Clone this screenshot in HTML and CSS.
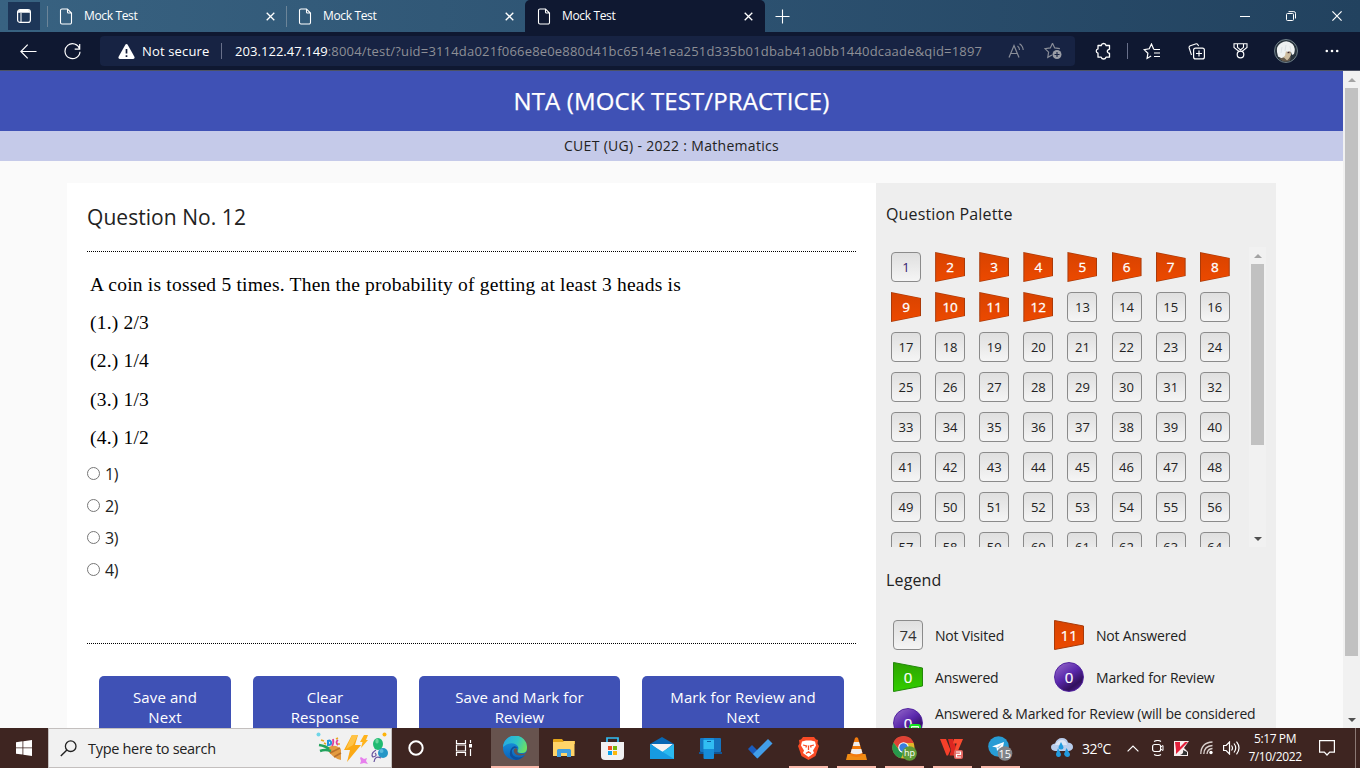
FILE: index.html
```html
<!DOCTYPE html>
<html lang="en">
<head>
<meta charset="utf-8">
<title>Mock Test</title>
<link rel="stylesheet" href="styles.css">
</head>
<body>
<svg class="defs" width="0" height="0">
  <defs>
    <linearGradient id="g-red" x1="0" y1="0" x2="0" y2="1"><stop offset="0" stop-color="#d84300"/><stop offset="1" stop-color="#ec4900"/></linearGradient>
    <linearGradient id="g-green" x1="0" y1="0" x2="0" y2="1"><stop offset="0" stop-color="#2ea300"/><stop offset="1" stop-color="#31cf00"/></linearGradient>
    <symbol id="page" viewBox="0 0 14 17"><path d="M1.500 2.500a1.500 1.500 0 0 1 1.500-1.500h5.500l4 4v9.500a1.500 1.500 0 0 1-1.500 1.500h-8a1.500 1.500 0 0 1-1.500-1.500zM8.500 1v3a1 1 0 0 0 1 1h3" fill="none" stroke="#fff" stroke-width="1.100"/></symbol>
    <symbol id="cross" viewBox="0 0 9 9"><path d="M.7.7l7.600 7.600M8.300.7L.7 8.300" stroke="#fff" stroke-width="1.300"/></symbol>
  </defs>
</svg>
<div class="screen">
  <div class="tabstrip">
    <div class="tab-menu"><svg width="14" height="14" viewBox="0 0 14 14"><rect x=".6" y=".6" width="12.800" height="12.800" rx="2.500" fill="none" stroke="#fff" stroke-width="1.200"/><path d="M1 3.800V3Q1 1 3 1h8q2 0 2 2v.8z" fill="#fff"/><path d="M4 4v9" stroke="#fff"/></svg></div>
    <div class="tab"><svg class="tab-page" width="14" height="17"><use href="#page"/></svg><span>Mock Test</span><svg width="9" height="9"><use href="#cross"/></svg></div>
    <div class="tab"><svg class="tab-page" width="14" height="17"><use href="#page"/></svg><span>Mock Test</span><svg width="9" height="9"><use href="#cross"/></svg></div>
    <div class="tab active"><svg class="tab-page" width="14" height="17"><use href="#page"/></svg><span>Mock Test</span><svg width="9" height="9"><use href="#cross"/></svg></div>
    <div class="new-tab"><svg width="15" height="15" viewBox="0 0 15 15"><path d="M7.500.5v14M.5 7.500h14" stroke="#fff" stroke-width="1.100"/></svg></div>
    <div class="win-controls">
      <span><svg width="10" height="10"><path d="M0 5.500h10" stroke="#fff"/></svg></span>
      <span><svg width="10" height="10" viewBox="0 0 10 10"><rect x=".5" y="2.500" width="7" height="7" rx="1" fill="none" stroke="#fff"/><path d="M2.500.6h5.300q1.700 0 1.700 1.700v5.200" fill="none" stroke="#fff"/></svg></span>
      <span><svg width="10" height="10" viewBox="0 0 10 10"><path d="M.4.4l9.200 9.200M9.600.4L.4 9.600" stroke="#fff" stroke-width="1.200"/></svg></span>
    </div>
  </div>

  <div class="toolbar">
    <div class="tool back"><svg width="17" height="15" viewBox="0 0 17 15"><path d="M16.500 7.500H1M7.700.7L.9 7.500l6.800 6.800" fill="none" stroke="#fff" stroke-width="1.200"/></svg></div>
    <div class="tool"><svg width="17" height="17" viewBox="0 0 17 17"><path d="M15.700 6A7.500 7.500 0 1 0 16 8.700M15.700 1v5.200h-5" fill="none" stroke="#fff" stroke-width="1.200"/></svg></div>
    <div class="address">
      <svg class="warn" width="17" height="15" viewBox="0 0 17 15"><path d="M7.300.8q1.200-1.600 2.400 0l6.700 12q.7 2-1.200 2.200H1.800Q-.1 14.800.6 12.800z" fill="#fff"/><path d="M8.500 5v4.500M8.500 11.300v1.700" stroke="#101936" stroke-width="1.700"/></svg>
      <span class="not-secure">Not secure</span>
      <i class="divider"></i>
      <span class="url"><b>203.122.47.149</b>:8004/test/?uid=3114da021f066e8e0e880d41bc6514e1ea251d335b01dbab41a0bb1440dcaade&amp;qid=1897</span>
      <svg class="read" width="17" height="16" viewBox="0 0 17 16"><path d="M1 14.500L6 2.500l5 12M2.800 10.500h6.400" fill="none" stroke="#898d98" stroke-width="1.200"/><path d="M9.500 3q2 1.500 2 4M11.500.8q3.500 2.300 3.700 6.200" fill="none" stroke="#898d98" stroke-width="1.100"/></svg>
      <svg width="18" height="18" viewBox="0 0 18 18"><path d="M8.500 1.300l2.200 4.600 5.200.8M8 13l-4.200 2.300.8-5.200L1 6.700l5.300-.8 2.200-4.600" fill="none" stroke="#898d98" stroke-width="1.200"/><circle cx="13" cy="12.500" r="4.500" fill="#9a9da6"/><path d="M13 10v5M10.500 12.500h5" stroke="#172343" stroke-width="1.100"/></svg>
    </div>
    <div class="tool puzzle"><svg width="17" height="18" viewBox="0 0 17 18"><path d="M3 3.500h3.200a2.500 2.500 0 0 1 4.900 0h3.400v3.700l-1.300.6a1.700 1.700 0 0 0 0 3l1.300.6v3.800H11a2.500 2.500 0 0 1-4.800 0H3v-4a2.200 2.200 0 0 1 0-4.300z" fill="none" stroke="#fff" stroke-width="1.300" stroke-linejoin="round"/></svg></div>
    <i class="divider"></i>
    <div class="tool favs"><svg width="18" height="17" viewBox="0 0 18 17"><path d="M10.700 6.200L8.500 1 6.200 5.800l-5 .8 3.700 3.600-.8 5.200 4-2.400M10.700 6.500H17M11 10h6M11 13.500h6" fill="none" stroke="#fff" stroke-width="1.200"/></svg></div>
    <div class="tool"><svg width="17" height="17" viewBox="0 0 17 17"><path d="M3.500 12L1.200 5Q.7 3.300 2.300 2.700L7.500.9q1.600-.5 2.400.8l.7 1.300" fill="none" stroke="#fff" stroke-width="1.100"/><rect x="5.600" y="5.100" width="10.800" height="10.800" rx="2" fill="none" stroke="#fff" stroke-width="1.200"/><path d="M11 7.500v6M8 10.500h6" stroke="#fff" stroke-width="1.200"/></svg></div>
    <div class="tool"><svg width="15" height="16" viewBox="0 0 15 16"><path d="M1 .8h13v3.700L9 8.500H6L1 4.500zM4.500 1v3.300L7.500 7l3-2.700V1" fill="none" stroke="#fff" stroke-width="1.100"/><circle cx="7.500" cy="11.500" r="3.300" fill="#0f1831" stroke="#fff" stroke-width="1.200"/></svg></div>
    <div class="tool profile"><svg width="24" height="24" viewBox="0 0 24 24"><circle cx="12" cy="12" r="11.500" fill="#27323c" stroke="#70808a"/><path d="M8.500 12h8l.5 4-3 6-5-1z" fill="#cdbb9e"/><path d="M3 13Q2 7 7 4q6-4 11.500 1Q22 9 20 15l-2 1-1-3-2-1-1 2-2-2-1 4.500-3 3-4-2z" fill="#eef1f2"/><path d="M8 8l-1 6M12 6l-1 6M16 7l1 5" stroke="#d3dade" stroke-width=".7"/><path d="M13.500 12.700h2v1.500h-2z" fill="#3d2628"/><path d="M5 19.500l5-1 3 3 4-4-1 4q-6 3-11-2" fill="#64594c"/></svg></div>
    <div class="tool"><svg width="14" height="4" viewBox="0 0 14 4"><circle cx="1.800" cy="2" r="1.300" fill="#fff"/><circle cx="7" cy="2" r="1.300" fill="#fff"/><circle cx="12.200" cy="2" r="1.300" fill="#fff"/></svg></div>
  </div>

  <div class="viewport">
    <div class="page">
      <header class="banner"><span>NTA (MOCK TEST/PRACTICE)</span></header>
      <div class="subject"><span>CUET (UG) - 2022 : Mathematics</span></div>
      <div class="content">
        <main class="question">
          <h1><span>Question No. 12</span></h1>
          <div class="question-body">
            <div class="statement">
              <p><span>A coin is tossed 5 times. Then the probability of getting at least 3 heads is</span></p>
              <p>(1.) 2/3</p><p>(2.) 1/4</p><p>(3.) 1/3</p><p>(4.) 1/2</p>
            </div>
            <div class="options">
              <label><i></i>1)</label><label><i></i>2)</label><label><i></i>3)</label><label><i></i>4)</label>
            </div>
          </div>
          <div class="actions">
            <div class="btn b1">Save and<br>Next</div>
            <div class="btn b2">Clear<br>Response</div>
            <div class="btn b3">Save and Mark for<br>Review</div>
            <div class="btn b4">Mark for Review and<br>Next</div>
          </div>
        </main>
        <aside class="side">
          <h2 class="palette-title"><span>Question Palette</span></h2>
          <div class="palette">
            <div class="cells">
              <b class="visit">1</b><b class="no">2</b><b class="no">3</b><b class="no">4</b><b class="no">5</b><b class="no">6</b><b class="no">7</b><b class="no">8</b>
              <b class="no">9</b><b class="no">10</b><b class="no">11</b><b class="no">12</b><b>13</b><b>14</b><b>15</b><b>16</b>
              <b>17</b><b>18</b><b>19</b><b>20</b><b>21</b><b>22</b><b>23</b><b>24</b>
              <b>25</b><b>26</b><b>27</b><b>28</b><b>29</b><b>30</b><b>31</b><b>32</b>
              <b>33</b><b>34</b><b>35</b><b>36</b><b>37</b><b>38</b><b>39</b><b>40</b>
              <b>41</b><b>42</b><b>43</b><b>44</b><b>45</b><b>46</b><b>47</b><b>48</b>
              <b>49</b><b>50</b><b>51</b><b>52</b><b>53</b><b>54</b><b>55</b><b>56</b>
              <b>57</b><b>58</b><b>59</b><b>60</b><b>61</b><b>62</b><b>63</b><b>64</b>
            </div>
            <div class="scrollbar"><i class="up"></i><i class="thumb"></i><i class="down"></i></div>
          </div>
          <h2 class="legend-title"><span>Legend</span></h2>
          <div class="legend">
            <div class="mark box">74</div><span>Not Visited</span>
            <div class="mark"><svg width="30" height="30"><path d="M.5.5L29.500 6v18L.5 29.500z" fill="url(#g-red)" stroke="#a83a0a"/></svg><em>11</em></div><span>Not Answered</span>
            <div class="mark"><svg width="30" height="30"><path d="M.5.5L29.500 6v18L.5 29.500z" fill="url(#g-green)" stroke="#23880c"/></svg><em>0</em></div><span>Answered</span>
            <div class="mark ball"><em>0</em></div><span>Marked for Review</span>
            <div class="mark ball"><em>0</em><svg class="tick" width="12" height="14"><rect x="1" y="1" width="10" height="10" rx="2" fill="#e9ffe5" stroke="#12e61c" stroke-width="2"/><path d="M3 4.500h6" stroke="#12e61c" stroke-width="2"/></svg></div>
            <span class="wide">Answered &amp; Marked for Review (will be considered for evaluation)</span>
          </div>
        </aside>
      </div>
    </div>
    <div class="scrollbar main-scroll"><i class="up"></i><i class="thumb"></i><i class="down"></i></div>
  </div>

  <footer class="taskbar">
    <div class="start"><svg width="16" height="16" viewBox="0 0 16 16"><path d="M0 2.300L6.500 1.300V7.500H0zM7.300 1.200L16 0v7.500H7.300zM0 8.300h6.500v6.300L0 13.700zM7.300 8.300H16V16l-8.700-1.200z" fill="#fff"/></svg></div>
    <div class="search">
      <svg width="17" height="17" viewBox="0 0 17 17"><circle cx="10.700" cy="6.200" r="5.300" fill="none" stroke="#222" stroke-width="1.300"/><path d="M6.900 10L.8 16.100" stroke="#222" stroke-width="1.400"/></svg>
      <span>Type here to search</span>
      <svg class="party" width="72" height="32" viewBox="0 0 72 32">
        <circle cx="2.500" cy="2.500" r="2" fill="#6fd5e8"/><circle cx="68.500" cy="2.500" r="2" fill="#fdb40b"/>
        <path d="M11 17q3-4 9-3 5 2 5 4v10q-9-2-14-11z" fill="#e39b40"/><path d="M14 21l10-5M18 25l7-4" stroke="#b9702c" stroke-width="1.500"/><path d="M3 13q7 1 10 4M4 19q5-2 11 0" stroke="#23a35d" stroke-width="2.500" fill="none"/><path d="M12 8v5q4 0 3-3-1-2-3-1" fill="none" stroke="#2194df" stroke-width="2"/><path d="M17 7q1 4-1 7M22 13q-3-3 0-5" fill="none" stroke="#e0409a" stroke-width="1.800"/><path d="M5 8l3 1M20 7l2-1M8 11l2 1M22 12h2" stroke="#e8a723" stroke-width="1.600"/>
        <path d="M36 3h6l-3 10h6L31 30l3-12h-6z" fill="#fba914"/><path d="M36 3h6l-5 10-7 4z" fill="#ffc346"/><path d="M48 3h4l-2 5h2l-7 8 1.500-6H44z" fill="#ffb31b"/>
        <path d="M45 25l3 2 3-1-1 3 2 3-4-1-4 1 1-3-1-3z" fill="#e780ed"/>
        <ellipse cx="62" cy="12" rx="5" ry="6" fill="#20bb71"/><ellipse cx="61" cy="9" rx="1.700" ry="2.500" fill="#67d79b"/><circle cx="67" cy="21" r="5" fill="#2596c6"/><circle cx="65.500" cy="19" r="2" fill="#5bbbdc"/><path d="M60 18q-6 4-3 7 5-1 2-4M65 26q-6-3-7 4" fill="none" stroke="#6a55a0" stroke-width="1.200"/>
      </svg>
    </div>
    <div class="app"><svg width="16" height="16"><circle cx="8" cy="8" r="6.700" fill="none" stroke="#fff" stroke-width="2"/></svg></div>
    <div class="app view"><svg width="17" height="16" viewBox="0 0 17 16"><path d="M1.500 0v3.500h9V0M1.500 16v-3.500h9V16M1.500 5h9v6h-9zM15.500 0v3M15.500 9v7" fill="none" stroke="#fff" stroke-width="1.200"/><path d="M14 4h3v3.500h-3z" fill="#fff"/></svg></div>
    <div class="app edge on"><svg width="24" height="24" viewBox="0 0 24 24"><defs><linearGradient id="e1" x1="0" x2="1" y1=".3" y2=".6"><stop offset="0" stop-color="#26a8e4"/><stop offset=".55" stop-color="#2fc5c5"/><stop offset="1" stop-color="#6ee061"/></linearGradient><linearGradient id="e2" x1="0" x2="0" y1="0" y2="1"><stop offset="0" stop-color="#1a9de4"/><stop offset="1" stop-color="#0b61b8"/></linearGradient></defs><circle cx="12" cy="12" r="12" fill="url(#e2)"/><path d="M0 11A12 12 0 0 1 24 12q0 5-5 5-5 0-4.500-2.500Q17 11 13 8.500 7 5 0 11z" fill="url(#e1)"/><path d="M9 14q-1 7 6.500 7.500 4 .2 6.500-3A12 12 0 0 1 13 24Q4 21 8 13q3-5 7-1-4-1-6 2z" fill="#0d4f9d"/><path d="M14.500 14.500Q13 18 19 18q3 0 4.500-2l-1 2.500q-9 3-11.500-2.500-1-3 2-4 1.500.5 1.500 2.500z" fill="#67534e"/></svg></div>
    <div class="app explorer"><svg width="22" height="18" viewBox="0 0 22 18"><path d="M0 2V.7Q0 0 1 0h8l1.500 2H22v3H0z" fill="#e4a519"/><path d="M0 3h10l1-1h10.500v15H0z" fill="#ffd469"/><path d="M4 18v-6.500q0-1.500 1.500-1.500h11q1.500 0 1.500 1.500V18h-4v-4H8v4z" fill="#409edf"/></svg></div>
    <div class="app"><svg width="23" height="23" viewBox="0 0 23 23"><path d="M6 6V1h11v5" fill="none" stroke="#31bdf4" stroke-width="1.700"/><path d="M0 5h23v14q0 4-4 4H4q-4 0-4-4z" fill="#f1f1f2"/><path d="M7 9h4v4H7z" fill="#ef4f24"/><path d="M12 9h4v4h-4z" fill="#77b90b"/><path d="M7 14h4v4H7z" fill="#08a4ee"/><path d="M12 14h4v4h-4z" fill="#fcb80b"/></svg></div>
    <div class="app mail"><svg width="24" height="22" viewBox="0 0 24 22"><path d="M0 7L12 0l12 7v4H0z" fill="#0868b4"/><path d="M1 7h22L12 16z" fill="#f4f4f4"/><path d="M0 7l12 8 12-8v15H0z" fill="#2bbaf0"/><path d="M0 22V7l24 15z" fill="#179be2"/></svg></div>
    <div class="app phone"><svg width="24" height="22" viewBox="0 0 24 22"><rect x="1" y="1" width="21" height="14" rx="1" fill="#1574bf"/><path d="M0 15h23v2H0z" fill="#115696"/><rect x="4.500" y="1" width="10.500" height="21" rx="1" fill="#168cd8"/><path d="M4.500 3H15v9H4.500z" fill="#31bdf2"/><path d="M8 4.500h4" stroke="#0d5da3"/></svg></div>
    <div class="app todo"><svg width="25" height="21" viewBox="0 0 25 21"><path d="M0 11l4-4 9 9-4 4.500z" fill="#1a5cbe"/><path d="M5 16L20 1l4.500 4.500L9.500 20.500z" fill="#429ee9"/></svg></div>
    <div class="app run"><svg width="21" height="24" viewBox="0 0 21 24"><path d="M5 1h11l2 2.500 2 .5-.5 3.500L21 10l-3.500 10-7 4-7-4L0 10l1.500-2.500L1 4l2-.5z" fill="#fa4b25"/><path d="M4 5.500l4-1h5l4 1 1 4-3 5 1 2.500-5.500 4L5 17l1-2.500-3-5z" fill="#fff"/><path d="M5 9l3.500 1-.7 1.500M16 9l-3.500 1 .7 1.500M10.500 9.500V14M8 17.500l2.500-1.700 2.500 1.700" fill="none" stroke="#fa4b25" stroke-width="1.300"/></svg></div>
    <div class="app run"><svg width="21" height="23" viewBox="0 0 21 23"><path d="M1.500 17h18l1.500 6H0z" fill="#f08b13"/><path d="M9 1q1.500-1.500 3 0l5 17q-6.500 4-13 0z" fill="#f37b0d"/><path d="M8 5h5l1.200 4H6.800zM5.700 12h9.600l1.100 4q-6 2.500-11.800 0z" fill="#eee"/></svg></div>
    <div class="app run"><svg width="25" height="25" viewBox="0 0 25 25"><circle cx="11.500" cy="11.500" r="11" fill="#e3b629"/><path d="M1.500 6.500A11 11 0 0 1 21.700 7H11.500l-4 7z" fill="#df4235"/><path d="M1.500 6.500l6 8 4 2L9 22.300A11 11 0 0 1 1.500 6.500" fill="#27984c"/><circle cx="11.500" cy="11.500" r="5.300" fill="#fff"/><circle cx="11.500" cy="11.500" r="4.200" fill="#397fdd"/><circle cx="17.500" cy="17.500" r="7.300" fill="#5f9a38"/><text x="17.400" y="20.300" class="badge-hp">hp</text></svg></div>
    <div class="app run"><svg width="24" height="21" viewBox="0 0 24 21"><path d="M0 1h6l4.500 11L8 17.500H6.500z" fill="#f6402a"/><path d="M8 1h5l3 8-3 8.500H9.500l1.500-5z" fill="#dc2620"/><path d="M14 1h9l-7 16.500h-3l3.700-12H13z" fill="#fa4b30"/><rect x="14" y="12" width="9" height="9" rx="2" fill="#e36560"/><path d="M16 14h4.500v2.300h-4V19H21" fill="none" stroke="#fff" stroke-width="1.200"/></svg></div>
    <div class="app run"><svg width="25" height="25" viewBox="0 0 25 25"><circle cx="10.500" cy="10.500" r="10.300" fill="#279cd5"/><path d="M4 10.500L16 6l-2 10-3-3-2 2-.5-3.500z" fill="#fff"/><path d="M9 11.500l5-3.500-3.500 4.500" fill="#9bc9e1"/><circle cx="17" cy="17.500" r="7.300" fill="#818489"/><text x="16.800" y="21.600" class="badge-15">15</text></svg></div>
    <div class="weather"><svg width="22" height="20" viewBox="0 0 22 20"><path d="M4 13q-4-.5-4-4 0-3 4-3.500Q6 0 11 0q5 0 6 4.500 5 .5 5 4.500 0 3-4 4z" fill="#b9cdec"/><path d="M4 7q3-5 7-5 4 0 5 5z" fill="#dbe5f5"/><path d="M10 4l2.500 5q0 2.500-2.500 2.500T7.500 9zM7 10l3 6q0 3-2.500 3T5 16zM15.500 10l3.500 6q0 3-2.500 3T13 16z" fill="#219bdf"/></svg><span>32°C</span></div>
    <div class="tray">
      <svg width="12" height="7" viewBox="0 0 12 7"><path d="M.6 6.400L6 1l5.400 5.400" fill="none" stroke="#fff" stroke-width="1.200"/></svg>
      <svg class="cam" width="12" height="16" viewBox="0 0 12 16"><path d="M2 1.500q4-2 7 0M2 14.500q4 2 7 0" fill="none" stroke="#fff" stroke-width="1.100"/><rect x=".6" y="4.500" width="8" height="7" rx="2" fill="none" stroke="#fff" stroke-width="1.200"/><path d="M8.500 7l2.500-1.500v5L8.500 9" fill="none" stroke="#fff"/></svg>
      <svg width="15" height="15" viewBox="0 0 15 15"><path d="M0 0h15L10 7l4 4v4H0z" fill="#f7eeee"/><path d="M1 1h5v5l5-5h3L7 8 2 13V9z" fill="#e3203a"/><path d="M9 9l4 2v3H6q4-1 3-5" fill="#333"/></svg>
      <svg class="wifi" width="13" height="14" viewBox="0 0 13 14"><path d="M.8 13Q1 1.500 12.500 1M3.800 13Q4 5 12.500 4.500M7 13q.3-5 5.500-5.500" fill="none" stroke="#d9d0cd" stroke-width="1.300"/><circle cx="11" cy="11.500" r="1.700" fill="#fff"/></svg>
      <svg width="17" height="14" viewBox="0 0 17 14"><path d="M.6 4.500h2.500L6.500 1v12L3.100 9.500H.6zM8.500 4.500q2 2.500 0 5M11 2.500q3.500 4.500 0 9M13.500.7q5 6.300 0 12.600" fill="none" stroke="#fff" stroke-width="1.200"/></svg>
    </div>
    <div class="clock"><span class="time">5:17 PM</span><span class="date">7/10/2022</span></div>
    <div class="notice"><svg width="16" height="16" viewBox="0 0 16 16"><path d="M.6.600h14.800v11.500h-4.700L8 15l-2.700-2.900H.6z" fill="none" stroke="#fff" stroke-width="1.200"/></svg></div>
    <i class="desktop"></i>
  </footer>
</div>
</body>
</html>
```
FILE: styles.css
```css
* { box-sizing: border-box; }
body { margin: 0; overflow: hidden; font-family: "Open Sans", "Noto Sans", sans-serif; color: #222; }
svg { display: block; flex: none; }
.defs { position: absolute; }
.screen { width: 1360px; height: 768px; display: flex; flex-direction: column; overflow: hidden; }

/* Browser tabs */
.tabstrip { height: 32px; flex: none; display: flex; background: linear-gradient(90deg, #386281, #2c5170 55%, #22425f); color: #fff; }
.tab-menu { width: 32px; height: 28px; margin: 2px 7px 0 8px; background: #1d3658; display: flex; align-items: center; justify-content: center; }
.tab { width: 239px; display: flex; align-items: center; padding: 0 11px 0 11px; border-left: 1px solid transparent; border-image: linear-gradient(transparent 20%, #6c8599 20%, #6c8599 82%, transparent 82%) 1; font-size: 12px; letter-spacing: -.35px; }
.tab span { margin: 0 auto 1px 11px; }
.tab.active { width: 240px; background: #0f1831; border-image: none; border: 0; padding-left: 12px; padding-right: 12px; border-radius: 5px 5px 0 0; }
.new-tab { width: 34px; display: flex; align-items: center; justify-content: center; }
.win-controls { margin-left: auto; display: flex; }
.win-controls span { width: 46px; display: flex; align-items: center; justify-content: center; }

/* Address bar */
.toolbar { height: 39px; flex: none; display: flex; align-items: center; background: #0f1831; border-bottom: 1px solid #4c5263; }
.tool { width: 44px; flex: none; display: flex; justify-content: center; align-items: center; }
.back { margin-left: 6px; }
.address { width: 975px; height: 30px; margin-left: 6px; padding: 0 13px 0 18px; display: flex; align-items: center; border-radius: 4px; background: #172343; white-space: nowrap; }
.not-secure { width: 79px; margin-left: 7px; padding-bottom: 1px; font-size: 13px; color: #fff; letter-spacing: .15px; }
.divider { width: 1px; height: 16px; background: #68708a; flex: none; }
.url { width: 761px; margin-left: 13px; padding-bottom: 1px; font-size: 13px; letter-spacing: .185px; color: #8d8f96; flex: none; }
.url b { font-weight: 400; color: #fff; letter-spacing: .05px; }
.read { margin: 0 auto 0 12px; }
.puzzle { margin-left: 6px; margin-right: 2px; }
.favs { margin-left: 2px; }
.profile { margin: 0 2px; }

/* Web page */
.viewport { height: 657px; flex: none; display: flex; overflow: hidden; }
.page { width: 1343px; background: #fafafa; overflow: hidden; }
.banner { height: 60px; background: #3f51b5; color: #fff; text-align: center; font: 500 24px/60px "Open Sans", "Noto Sans", sans-serif; letter-spacing: .13px; -webkit-text-stroke: .25px #fff; }
.subject { height: 30px; background: #c5cae9; text-align: center; font-size: 14px; line-height: 30px; letter-spacing: .3px; }
.content { display: flex; margin: 22px 0 0 67px; }
.question { width: 809px; height: 620px; background: #fff; padding: 0 20px; }
h1, h2 { font-weight: 400; margin: 0; white-space: nowrap; }
h1 { height: 68px; font-size: 21px; line-height: 68px; letter-spacing: .05px; }
.question-body { height: 393px; border-top: 1px dotted #000; border-bottom: 1px dotted #000; }
.statement { padding: 14px 0 0 3px; font: 19.500px/38.200px "Liberation Serif", serif; color: #000; letter-spacing: .21px; }
.statement p { margin: 0; white-space: nowrap; }
.options { display: flex; flex-direction: column; padding-top: 1px; }
.options label { height: 32px; display: flex; align-items: center; gap: 5px; font-size: 16px; letter-spacing: -.5px; }
.options i { width: 13px; height: 13px; border: 1px solid #777; border-radius: 50%; margin-bottom: 1px; }
.actions { display: flex; gap: 22px; padding: 32px 0 0 12px; }
.btn { height: 62px; padding-top: 11px; border-radius: 5px; background: #3f51b5; color: #fff; text-align: center; font-size: 15px; line-height: 20px; letter-spacing: .1px; white-space: nowrap; }
.b1 { width: 132px; }
.b2 { width: 144px; }
.b3 { width: 201px; }
.b4 { width: 202px; }

.side { width: 400px; height: 620px; background: #eee; }
h2 { padding-left: 10px; font-size: 16px; letter-spacing: .15px; }
.palette-title { height: 64px; line-height: 62px; }
.palette { height: 300px; overflow: hidden; display: flex; padding: 0 10px 0 15px; justify-content: space-between; }
.cells { display: grid; grid-template-columns: repeat(8, 30px); grid-auto-rows: 30px; gap: 10px 14.110px; padding-top: 5px; }
.cells b, .mark.box { font-weight: 400; border: 1px solid #8b8b8b; border-radius: 4px; background: linear-gradient(#dfdfdf, #f5f5f5); text-align: center; }
.cells b { font-size: 13px; line-height: 28px; }
.cells .visit { color: #33206c; }
.cells .no { position: relative; z-index: 0; border: 0; border-radius: 0; font-size: 13.500px; line-height: 30px; color: #fff; -webkit-text-stroke: .3px #fff; background: #ab3a09; clip-path: polygon(0 0, 100% 20%, 100% 80%, 0 100%); }
.cells .no::before { content: ""; position: absolute; z-index: -1; inset: 1px; background: linear-gradient(#d84300, #ec4900); clip-path: polygon(0 0, 100% 19%, 100% 81%, 0 100%); }

.scrollbar { width: 17px; flex: none; display: flex; flex-direction: column; align-items: center; background: #f1f1f1; }
.scrollbar i { flex: none; }
.scrollbar .thumb { width: 13px; height: 181px; background: #c1c1c1; }
.up, .down { width: 17px; height: 17px; display: flex; align-items: center; justify-content: center; }
.up::after { content: ""; border: 4px solid transparent; border-top: 0; border-bottom-color: #a3a3a3; }
.down { margin-top: auto; }
.down::after { content: ""; border: 4px solid transparent; border-bottom: 0; border-top-color: #505050; }
.main-scroll .thumb { height: 568px; }

.legend-title { height: 73px; line-height: 66px; }
.legend { display: grid; grid-template-columns: 30px 107px 30px 180px; column-gap: 12px; grid-template-rows: 42px 42px 60px; padding-left: 17px; font-size: 14px; }
.legend > span { line-height: 32px; white-space: nowrap; letter-spacing: -.19px; }
.legend > .wide { grid-column: 2 / 5; white-space: normal; line-height: 20px; width: 329px; padding-top: 0; }
.mark { width: 30px; height: 30px; display: grid; place-items: center; font-size: 15px; color: #fff; }
.mark > svg, .mark > em { grid-area: 1 / 1; }
.mark em { font-style: normal; z-index: 1; -webkit-text-stroke: .2px #fff; }
.mark.box { color: #333; line-height: 28px; }
.ball { border-radius: 50%; background: linear-gradient(145deg, #8d60c5 8%, #5a28ac 45%, #32105d 75%, #5621a0); border: 1px solid #5223a0; }
.legend .ball:nth-child(9) { margin-top: 4px; }
.ball .tick { align-self: end; justify-self: end; margin: 0 1px -1px 0; z-index: 2; }

/* Taskbar */
.taskbar { height: 40px; flex: none; display: flex; background: #3e2521; color: #fff; }
.start { width: 48px; display: flex; align-items: center; justify-content: center; }
.search { width: 344px; display: flex; align-items: center; background: #f1f1f1; border: 1px solid #c3bfbe; padding-left: 11px; color: #222; font-size: 14.500px; letter-spacing: -.3px; white-space: nowrap; }
.search span { margin-left: 11px; }
.party { margin: 0 3px 0 auto; }
.app { width: 48px; flex: none; display: flex; align-items: center; justify-content: center; }
.view { padding-right: 2px; }
.edge { margin-left: 3px; background: #67534e; box-shadow: inset 0 -2px #f9b9ab; }
.explorer, .phone, .todo { margin-left: 1px; }
.mail { margin-left: 2px; }
.run { background: linear-gradient(#f9b9ab, #f9b9ab) 5px 38px / 39px 2px no-repeat; }
.badge-hp { font: 9px "Open Sans", sans-serif; fill: #fff; text-anchor: middle; }
.badge-15 { font: 11px "Open Sans", sans-serif; fill: #fff; text-anchor: middle; }
.weather { display: flex; align-items: center; gap: 9px; margin-left: 27px; font-size: 14px; letter-spacing: -.5px; }
.tray { display: flex; align-items: center; gap: 10px; margin-left: auto; margin-right: 8px; }
.cam { margin-left: 3px; }
.wifi { margin-left: 1px; }
.clock { width: 54px; display: flex; flex-direction: column; align-items: center; font-size: 12px; line-height: 18px; padding-top: 2px; letter-spacing: -.4px; white-space: nowrap; }
.notice { margin-left: 17px; display: flex; align-items: center; }
.desktop { width: 1px; margin: 0 4px 0 20px; background: #8b7975; }
```
